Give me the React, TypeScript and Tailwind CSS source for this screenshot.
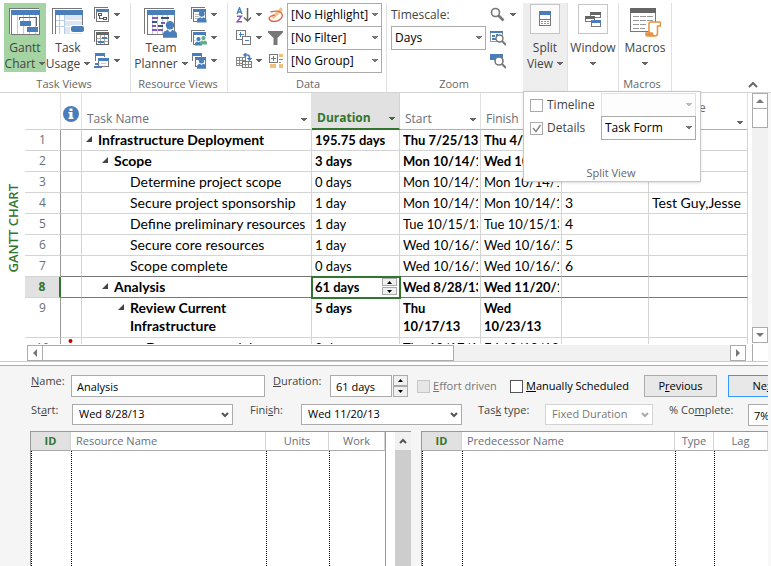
import React from "react";

const UI = "font-['Open_Sans','Noto_Sans',sans-serif]";
const GRID = "font-['Lato','Open_Sans',sans-serif]";

function Caret({ className = "text-[#666]" }: { className?: string }) {
  return (
    <svg width="6" height="4" viewBox="0 0 6 4" className={`shrink-0 ${className}`} shapeRendering="crispEdges">
      <path d="M0 0h6v1h-1v1h-1v1h-2v-1h-1v-1h-1z" fill="currentColor" />
    </svg>
  );
}

function Combo({ label, value, className, disabled }: { label: string; value: string; className: string; disabled?: boolean }) {
  return (
    <div className={`relative ${className}`}>
      <select
        aria-label={label}
        disabled={disabled}
        defaultValue={value}
        className={`block h-6 w-full appearance-none border pl-[3px] text-[12px] opacity-100 ${disabled ? "border-[#e1e1e1] bg-[#fdfdfd]" : "border-[#ababab] bg-white text-black"}`}
      >
        <option>{value}</option>
      </select>
      <span className="pointer-events-none absolute inset-y-0 right-1 flex items-center">
        <Caret className={disabled ? "text-[#bbb]" : "text-[#777]"} />
      </span>
    </div>
  );
}

/* ---------- ribbon icons ---------- */

function GanttIcon() {
  return (
    <svg width="32" height="28" viewBox="0 0 32 28" shapeRendering="crispEdges">
      <path d="M0 26V0h30v1H1v25z" fill="#777" />
      <path d="M1 1h29v1H2v24H1z" fill="#fff" />
      <rect x="2.500" y="2.500" width="28" height="24" fill="#fff" stroke="#777" />
      <rect x="3" y="2" width="28" height="5" fill="#4a7ebb" />
      <path d="M8.500 7v19M14.500 7v19M20.500 7v19M26.500 7v19" stroke="#b8cde4" />
      <path d="M10.500 12V9.500h17V18" stroke="#666" fill="none" />
      <rect x="11" y="13" width="11" height="5" fill="#4a7ebb" />
      <rect x="18" y="19" width="11" height="5" fill="#4a7ebb" />
    </svg>
  );
}

function UsageIcon() {
  return (
    <svg width="33" height="28" viewBox="0 0 33 28" shapeRendering="crispEdges">
      <path d="M0 26V0h30v1H1v25z" fill="#777" />
      <rect x="3.500" y="2.500" width="27" height="24" fill="#fff" />
      <path d="M3.500 26V3M30.500 3v14" stroke="#777" />
      <rect x="3" y="2" width="28" height="5" fill="#4a7ebb" />
      <rect x="13" y="7" width="17" height="19" fill="#dbe6f2" />
      <path d="M13 12.500h17M13 18.500h17" stroke="#fff" />
      <path d="M4 12.500h9M4 18.500h9M7.500 7v19M12.500 7v19" stroke="#b8cde4" />
      <rect x="18" y="17" width="14" height="8" fill="#fff" />
      <rect x="19" y="18" width="13" height="6" rx="2" fill="#4a7ebb" shapeRendering="auto" />
    </svg>
  );
}

function Person({ x, y, s = 1, fill = "#4a7ebb" }: { x: number; y: number; s?: number; fill?: string }) {
  return (
    <g transform={`translate(${x} ${y}) scale(${s})`} fill={fill}>
      <circle cx="5" cy="3" r="3" />
      <path d="M0 12V9.500C0 7.500 2 7 3.500 6.500L5 8l1.500-1.500C8 7 10 7.500 10 9.500V12z" />
    </g>
  );
}

function PlannerIcon() {
  return (
    <svg width="34" height="30" viewBox="0 0 34 30">
      <g shapeRendering="crispEdges">
        <path d="M0 26V0h30v1H1v25z" fill="#777" />
        <rect x="3.500" y="2.500" width="27" height="24" fill="#fff" stroke="#777" />
        <rect x="3" y="2" width="28" height="5" fill="#4a7ebb" />
        <path d="M8.500 7v19M13.500 7v19M18.500 7v19M23.500 7v19" stroke="#b8cde4" />
        <path d="M8 10h6M8 18h4M17 15h4" stroke="#8a56b5" strokeWidth="2" />
        <path d="M17 10h8M8 14h5M14 18h5" stroke="#3d5577" strokeWidth="2" />
        <path d="M8 22h5M14 22h5" stroke="#8a56b5" strokeWidth="2" />
      </g>
      <Person x={19} y={13} s={1.400} />
    </svg>
  );
}

function SmallIcon({ kind }: { kind: string }) {
  const frame = (
    <g shapeRendering="crispEdges">
      <path d="M0 12V0h14v1H1v11z" fill="#777" />
      <rect x="2.500" y="3.500" width="12" height="11" fill="#fff" stroke="#777" />
      <rect x="2" y="2" width="13" height="3" fill="#4a7ebb" />
    </g>
  );
  return (
    <svg width="16" height="16" viewBox="0 0 16 16" className="shrink-0">
      {kind === "network" && (
        <>
          {frame}
          <path d="M4.500 6.500h3v2h-3zM9.500 12.500h3v-2h-3zM5.500 9v2.500H9" fill="none" stroke="#555" shapeRendering="crispEdges" />
        </>
      )}
      {kind === "calendar" && (
        <g shapeRendering="crispEdges">
          <path d="M0 12V0h14v1H1v11z" fill="#777" />
          <rect x="2.500" y="2.500" width="12" height="12" fill="#fff" stroke="#666" />
          <rect x="2" y="2" width="13" height="3" fill="#666" />
          <path d="M6.500 5v9M10.500 5v9M3 8.500h11M3 11.500h11" stroke="#aaa" />
          <path d="M8 8h5M4 12h6" stroke="#4a7ebb" strokeWidth="2" />
        </g>
      )}
      {kind === "other" && (
        <g shapeRendering="crispEdges">
          <path d="M1.500 8V.5h9v3" fill="none" stroke="#777" />
          <rect x="1" y="0" width="10" height="3" fill="#4a7ebb" />
          <rect x="4.500" y="5.500" width="10" height="8" fill="#fff" stroke="#777" />
          <rect x="4" y="5" width="11" height="3" fill="#4a7ebb" />
          <path d="M0 14h8M1 11h3" stroke="#4a7ebb" strokeWidth="2" />
          <path d="M7 10.500h5" stroke="#b8cde4" />
        </g>
      )}
      {kind === "sheet" && (
        <>
          {frame}
          <path d="M4 7.500h4M4 9.500h4M4 11.500h4" stroke="#bbb" />
          <Person x={6} y={4} s={0.950} />
        </>
      )}
      {kind === "rusage" && (
        <>
          {frame}
          <path d="M3 7.500h11M3 10.500h5" stroke="#b8cde4" />
          <path d="M3 6h13v10H7z" fill="#fff" />
          <Person x={4} y={7} s={0.700} />
          <Person x={9} y={6} s={0.700} fill="#5fae8a" />
        </>
      )}
      {kind === "rother" && (
        <>
          <g shapeRendering="crispEdges">
            <path d="M1.500 8V.5h9v3" fill="none" stroke="#777" />
            <rect x="1" y="0" width="10" height="3" fill="#4a7ebb" />
            <rect x="4.500" y="5.500" width="10" height="8" fill="#fff" stroke="#777" />
            <rect x="4" y="4" width="11" height="3" fill="#4a7ebb" />
          </g>
          <Person x={6} y={5} s={0.900} />
        </>
      )}
      {kind === "sort" && (
        <g fill="none">
          <path d="M1 7L3.500.8 6 7M1.800 5h3.400" stroke="#4a7ebb" strokeWidth="1.400" />
          <path d="M1 9.200H5.500L1 14.800H6" stroke="#8a56b5" strokeWidth="1.400" />
          <path d="M11.500 1v13M8 10.500l3.500 3.500 3.500-3.500" stroke="#666" strokeWidth="1.500" />
        </g>
      )}
      {kind === "outline" && (
        <g shapeRendering="crispEdges" fill="none" stroke="#777">
          <path d="M.5.5h9v9h-9z" fill="#fff" />
          <path d="M6.500 6.500h8v8h-8z" fill="#fff" />
          <path d="M2.500 4.500h5M4.500 2v5M8.500 10.500h4" stroke="#4a7ebb" />
        </g>
      )}
      {kind === "tables" && (
        <g fill="none">
          <path d="M.5 4.500h9v8h-9zM.5 7.500h9M.5 10h9M3.500 5v7M6.500 5v7" stroke="#888" shapeRendering="crispEdges" />
          <path d="M6.500 8.500h9v6h-9z" fill="#fff" stroke="#777" shapeRendering="crispEdges" />
          <path d="M7 11.500h9M9.500 9v6M12.500 9v6" stroke="#888" shapeRendering="crispEdges" />
          <path d="M8 2h3.500c1.500 0 2 1 2 2.500V7M11.500 5l2 2 2-2M10 0L8 2l2 2" stroke="#4a7ebb" strokeWidth="1.500" />
        </g>
      )}
      {kind === "highlight" && (
        <g fill="none">
          <path d="M4.500 11L14 1.500" stroke="#f0c58a" strokeWidth="3.200" />
          <path d="M2.500 5c4-1 9-1.500 11 1 2.500 4-2 8.500-7.500 8.500C2 14.500-.5 11.500 2.500 9.500c1.500-1 3-1.500 4.500-1.500" stroke="#dd6a4e" strokeWidth="1.400" />
        </g>
      )}
      {kind === "filter" && <path d="M0 1h15v1.500L9.500 8v7h-4V8L0 2.500z" fill="#777" />}
      {kind === "group" && (
        <g shapeRendering="crispEdges">
          <path d="M1.500 1.500h8v8h-8zM3 5.500h5M5.500 3v5" fill="#fff" stroke="#777" />
          <path d="M11 1h4v3h-4zM2 11h6v4H2zM11 11h4v4h-4z" fill="#efbf7b" />
          <path d="M11 6.500h4M11 9.500h2" stroke="#888" />
        </g>
      )}
      {kind === "zoom" && (
        <g fill="none" stroke="#777">
          <circle cx="5.500" cy="5.500" r="4" strokeWidth="1.600" />
          <path d="M8.500 8.500l5 5" strokeWidth="2.600" />
        </g>
      )}
      {kind === "zoomsheet" && (
        <g>
          <path d="M.5 1.500h12v10H.5z" fill="#fff" stroke="#999" shapeRendering="crispEdges" />
          <path d="M0 1h13v2H0zM2 5h3v2H2zM2 8h4v2H2zM6 4h2v2H6z" fill="#4a7ebb" shapeRendering="crispEdges" />
          <circle cx="9.500" cy="8.500" r="3.500" fill="#fff" stroke="#777" strokeWidth="1.400" />
          <path d="M12 11l4 4" stroke="#777" strokeWidth="2" />
        </g>
      )}
      {kind === "zoomsel" && (
        <g>
          <path d="M0 1h13v6H0z" fill="#4a7ebb" shapeRendering="crispEdges" />
          <circle cx="9" cy="8" r="4" fill="#fff" stroke="#777" strokeWidth="1.600" />
          <path d="M12 11l4 4" stroke="#777" strokeWidth="2" />
        </g>
      )}
    </svg>
  );
}

function SmallButton({ kind, label, caret = true }: { kind: string; label: string; caret?: boolean }) {
  return (
    <button type="button" aria-label={label} className="flex h-[23px] items-center gap-1">
      <SmallIcon kind={kind} />
      {caret && <Caret />}
    </button>
  );
}

function Group({ title, className, children }: { title: string; className: string; children: React.ReactNode }) {
  return (
    <section className={`flex shrink-0 flex-col justify-between border-r border-[#e1e1e1] ${className}`}>
      <div className="flex">{children}</div>
      <h2 className="pr-1.5 text-center text-[11px] leading-4 text-[#666]">{title}</h2>
    </section>
  );
}

function BigButton({ icon, lines, className }: { icon: React.ReactNode; lines: [string, string?]; className: string }) {
  return (
    <button type="button" className={`flex h-[69px] flex-col items-center pt-[5px] text-[12px] leading-4 text-[#444] ${className}`}>
      <span className="flex h-[33px] items-start">{icon}</span>
      <span>{lines[0]}</span>
      <span className="flex h-4 items-center gap-1">
        {lines[1]}
        <Caret />
      </span>
    </button>
  );
}

function Ribbon() {
  return (
    <header className="flex h-[93px] shrink-0 border-b border-[#d4d4d4] bg-white pt-[3px] pl-1">
      <Group title="Task Views" className="w-[127px]">
        <BigButton icon={<GanttIcon />} lines={["Gantt", "Chart"]} className="w-[42px] bg-[#a5d3a2]" />
        <BigButton icon={<UsageIcon />} lines={["Task", "Usage"]} className="w-[44px]" />
        <div className="flex flex-col pl-1">
          <SmallButton kind="network" label="Network Diagram" />
          <SmallButton kind="calendar" label="Calendar" />
          <SmallButton kind="other" label="Other Task Views" />
        </div>
      </Group>
      <Group title="Resource Views" className="w-[97px] pl-1">
        <BigButton icon={<PlannerIcon />} lines={["Team", "Planner"]} className="w-[52px]" />
        <div className="flex flex-col pl-1">
          <SmallButton kind="sheet" label="Resource Sheet" />
          <SmallButton kind="rusage" label="Resource Usage" />
          <SmallButton kind="rother" label="Other Resource Views" />
        </div>
      </Group>
      <Group title="Data" className="w-[159px] pl-2">
        <div className="flex w-8 flex-col">
          <SmallButton kind="sort" label="Sort" />
          <SmallButton kind="outline" label="Outline" />
          <SmallButton kind="tables" label="Tables" />
        </div>
        <div className="flex w-[19px] flex-col">
          <SmallButton kind="highlight" label="Highlight" caret={false} />
          <SmallButton kind="filter" label="Filter" caret={false} />
          <SmallButton kind="group" label="Group" caret={false} />
        </div>
        <div className="flex flex-col -space-y-px">
          <Combo label="Highlight" value="[No Highlight]" className="w-[95px]" />
          <Combo label="Filter" value="[No Filter]" className="w-[95px]" />
          <Combo label="Group by" value="[No Group]" className="w-[95px]" />
        </div>
      </Group>
      <Group title="Zoom" className="w-[136px] border-r-0 pl-1">
        <div className="flex w-[95px] flex-col">
          <span className="h-[23px] text-[12px] leading-[23px] text-[#444]">Timescale:</span>
          <Combo label="Timescale" value="Days" className="w-full" />
        </div>
        <div className="flex flex-col pl-1">
          <SmallButton kind="zoom" label="Zoom" />
          <SmallButton kind="zoomsheet" label="Entire Project" caret={false} />
          <SmallButton kind="zoomsel" label="Selected Tasks" caret={false} />
        </div>
      </Group>
      <button type="button" className="flex w-[45px] shrink-0 flex-col items-center border-r border-[#e1e1e1] bg-[#eee] pt-px text-[12px] leading-4 text-[#444]">
        <span className="mb-1.5 flex h-[30px] w-[30px] items-center justify-center border border-[#c6c6c6] bg-[#fbfbfb]">
          <svg width="12" height="16" viewBox="0 0 12 16" shapeRendering="crispEdges">
            <rect x=".5" y=".5" width="11" height="14" fill="#fff" stroke="#777" />
            <path d="M0 0h12v4H0z" fill="#4a7ebb" />
            <path d="M1 8.500h10" stroke="#777" />
            <path d="M2 10.500h8M2 12.500h8" stroke="#999" strokeDasharray="2 1" />
          </svg>
        </span>
        <span>Split</span>
        <span className="flex items-center gap-1">View <Caret /></span>
      </button>
      <button type="button" className="flex w-[51px] shrink-0 flex-col items-center border-r border-[#e1e1e1] pt-px text-[12px] leading-4 text-[#444]">
        <span className="mb-1.5 flex h-[30px] w-[30px] items-center justify-center border border-[#c6c6c6] bg-white">
          <svg width="16" height="15" viewBox="0 0 16 15" shapeRendering="crispEdges">
            <path d="M5.500.5h10v5h-10z" fill="#fff" stroke="#777" />
            <path d="M5 0h11v3H5z" fill="#666" />
            <path d="M.5 4.500h9v5h-9z" fill="#fff" stroke="#777" />
            <path d="M0 4h10v3H0z" fill="#666" />
            <path d="M6.500 8.500h9v6h-9z" fill="#fff" stroke="#777" />
            <path d="M6 8h10v3H6z" fill="#4a7ebb" />
          </svg>
        </span>
        <span>Window</span>
        <span className="flex h-4 items-center"><Caret /></span>
      </button>
      <Group title="Macros" className="w-[53px]">
        <BigButton
          className="w-full"
          lines={["Macros"]}
          icon={
            <svg width="31" height="29" viewBox="0 0 31 29">
              <g shapeRendering="crispEdges">
                <path d="M.5.5h25v23H.5z" fill="#fff" stroke="#777" />
                <path d="M0 0h26v5H0z" fill="#666" />
                <path d="M3 8.500h20M3 12.500h20M3 16.500h14M3 20.500h12" stroke="#999" strokeDasharray="6 1" />
              </g>
              <path d="M19 25.500V16c0-1.500 1-2 2-2h8c1 0 1.500.8 1.500 2v2h-3v7c0 2-1 3-2.500 3h-7c-1.500 0-2.500-1-2-3h6c0 2 1 3 2.500 3" fill="#fff" stroke="#e8913f" strokeWidth="1.500" />
              <path d="M16.500 25h6.500c0 1.500.8 2.500 2 3h-6.500c-1.500 0-2.500-1-2-3z" fill="#e8913f" />
            </svg>
          }
        />
      </Group>
      <button type="button" aria-label="Collapse the Ribbon" className="ml-auto flex items-end pr-[13px] pb-1">
        <svg width="10" height="6" viewBox="0 0 10 6"><path d="M1 5l4-4 4 4" fill="none" stroke="#666" strokeWidth="2" /></svg>
      </button>
    </header>
  );
}

function SplitViewMenu() {
  return (
    <div className="absolute top-[91px] left-[523px] z-10 flex h-[91px] w-[178px] flex-col border border-[#c6c6c6] bg-white pt-px pr-1 pl-1.5 text-[12px] text-[#444] shadow-sm">
      <div className="flex items-center">
        <label className="flex w-[71px] items-center gap-1">
          <input type="checkbox" className="h-[13px] w-[13px] appearance-none border border-[#ababab] bg-white" />
          Timeline
        </label>
        <Combo label="Timeline view" value="" disabled className="w-[95px]" />
      </div>
      <div className="-mt-px flex items-center">
        <label className="flex w-[71px] items-center gap-1">
          <span className="grid">
            <input type="checkbox" defaultChecked className="col-start-1 row-start-1 h-[13px] w-[13px] appearance-none border border-[#ababab] bg-white" />
            <svg width="13" height="13" viewBox="0 0 13 13" className="pointer-events-none col-start-1 row-start-1">
              <path d="M3 6l3 3.500L10.500 3" fill="none" stroke="#888" strokeWidth="1.500" />
            </svg>
          </span>
          Details
        </label>
        <Combo label="Details view" value="Task Form" className="w-[95px]" />
      </div>
      <div className="mt-auto pr-1 text-center text-[11px] leading-4 text-[#666]">Split View</div>
    </div>
  );
}

/* ---------- task sheet ---------- */

type Task = {
  id: number;
  name: string;
  level: number;
  summary?: boolean;
  duration: string;
  start: string;
  finish: string;
  pred?: string;
  res?: string;
  flag?: boolean;
};

const tasks: Task[] = [
  { id: 1, name: "Infrastructure Deployment", level: 0, summary: true, duration: "195.75 days", start: "Thu 7/25/13", finish: "Thu 4/24/14" },
  { id: 2, name: "Scope", level: 1, summary: true, duration: "3 days", start: "Mon 10/14/13", finish: "Wed 10/16/13" },
  { id: 3, name: "Determine project scope", level: 2, duration: "0 days", start: "Mon 10/14/13", finish: "Mon 10/14/13" },
  { id: 4, name: "Secure project sponsorship", level: 2, duration: "1 day", start: "Mon 10/14/13", finish: "Mon 10/14/13", pred: "3", res: "Test Guy,Jesse Ryan" },
  { id: 5, name: "Define preliminary resources", level: 2, duration: "1 day", start: "Tue 10/15/13", finish: "Tue 10/15/13", pred: "4" },
  { id: 6, name: "Secure core resources", level: 2, duration: "1 day", start: "Wed 10/16/13", finish: "Wed 10/16/13", pred: "5" },
  { id: 7, name: "Scope complete", level: 2, duration: "0 days", start: "Wed 10/16/13", finish: "Wed 10/16/13", pred: "6" },
  { id: 8, name: "Analysis", level: 1, summary: true, duration: "61 days", start: "Wed 8/28/13", finish: "Wed 11/20/13" },
  { id: 9, name: "Review Current Infrastructure", level: 2, summary: true, duration: "5 days", start: "Thu 10/17/13", finish: "Wed 10/23/13" },
  { id: 10, name: "Document model", level: 3, duration: "2 days", start: "Thu 10/17/13", finish: "Fri 10/18/13", flag: true },
];

const indent = ["pl-px", "pl-[17px]", "pl-[33px]", "pl-[49px]"];

function HeadCell({ children, pad = "pb-[3px]", active }: { children?: React.ReactNode; pad?: string; active?: boolean }) {
  return (
    <th className={`h-[37px] border-r border-b px-1 pt-0 align-bottom font-normal ${active ? "border-b-2 border-r-[#d4d4d4] border-b-[#31752f] bg-[#e1e1e1]" : "border-r-[#e1e1e1] border-b-[#b1b1b1]"} ${pad}`}>
      <div className={`flex items-end justify-between pl-px text-[12px] leading-[14px] ${active ? "font-bold text-[#31752f]" : "text-[#6a6e7a]"}`}>
        <span>{children}</span>
        <span className="flex h-3 items-center"><Caret className={active ? "text-[#31752f]" : "text-[#666]"} /></span>
      </div>
    </th>
  );
}

function Spin() {
  return (
    <span className="flex flex-col gap-px">
      {["M1 3h5L3.500 0z", "M1 0h5L3.500 3z"].map((d, i) => (
        <button key={i} type="button" aria-label={i ? "Decrease" : "Increase"} className="flex h-2 w-[15px] items-center justify-center border border-[#ababab] bg-[#f0f0f0]">
          <svg width="7" height="3" viewBox="0 0 7 3"><path d={d} fill="#000" /></svg>
        </button>
      ))}
    </span>
  );
}

function TaskSheet() {
  return (
    <div className="flex h-[251px] overflow-hidden">
      <div className="flex w-[25px] shrink-0 items-center justify-center pt-5">
        <span className="rotate-180 text-[13px] leading-[18px] font-semibold whitespace-nowrap text-[#31752f] [writing-mode:vertical-rl]">GANTT CHART</span>
      </div>
      <div className="min-w-0 flex-1 overflow-hidden">
        <table className="w-full table-fixed border-separate border-spacing-0 text-left">
          <colgroup>
            <col className="w-9" />
            <col className="w-[21px]" />
            <col className="w-[230px]" />
            <col className="w-[88px]" />
            <col className="w-[81px]" />
            <col className="w-[81px]" />
            <col className="w-[87px]" />
            <col />
          </colgroup>
          <thead>
            <tr>
              <th aria-label="Row" className="border-r border-b border-r-[#e1e1e1] border-b-[#d4d4d4]" />
              <th aria-label="Indicators" className="border-r border-b border-r-[#e1e1e1] border-b-[#b1b1b1] p-0 pb-[7px] pl-0.5 align-bottom">
                <svg width="16" height="16" viewBox="0 0 16 16">
                  <circle cx="8" cy="8" r="8" fill="#4a7ebb" />
                  <path d="M6.500 2.500h3v2.500h-3zM5.500 6h4v5.500h1V13h-5v-1.500h1v-4h-1z" fill="#fff" />
                </svg>
              </th>
              <HeadCell>Task Name</HeadCell>
              <HeadCell active>Duration</HeadCell>
              <HeadCell>Start</HeadCell>
              <HeadCell>Finish</HeadCell>
              <HeadCell>Predecessors</HeadCell>
              <HeadCell pad="pb-0">Resource<br />Names</HeadCell>
            </tr>
          </thead>
          <tbody className={GRID}>
            {tasks.map((t) => {
              const sel = t.id === 8;
              const edge = t.id === 7 || sel ? "border-b-[#777]" : "border-b-[#d4d4d4]";
              const cell = `border-r border-b border-r-[#d4d4d4] ${edge} pt-0 pb-px pl-[3px] pr-0.5 align-top leading-[18px] text-black ${t.summary ? "font-bold" : ""}`;
              const text = `block overflow-hidden pt-px ${t.id === 9 ? "" : "whitespace-nowrap"}`;
              return (
                <tr key={t.id} className={t.id === 9 ? "h-10" : ""}>
                  <td className={`border-r border-b border-b-[#d4d4d4] p-0 pt-px text-center align-top text-[12px] leading-[18px] ${UI} ${sel ? "border-r-2 border-r-[#31752f] bg-[#e1e1e1] font-bold text-[#31752f]" : "border-r-[#999] text-[#6a6e7a]"}`}>{t.id}</td>
                  <td className={`border-r border-b border-r-[#d4d4d4] p-0 align-top ${edge}`}>
                    {t.flag && (
                      <svg width="19" height="18" viewBox="0 0 19 18" className="block">
                        <circle cx="9.500" cy="3" r="2" fill="#c00000" />
                        <path d="M6 6h7v5H6zM7 11h5v6H7z" fill="#c00000" />
                      </svg>
                    )}
                  </td>
                  <td className={`${cell} text-[14px]`}>
                    <div className={`flex gap-1 ${indent[t.level]}`}>
                      <span className="flex h-[18px] w-2 shrink-0 items-center">
                        {t.summary && <svg width="6" height="6" viewBox="0 0 6 6"><path d="M6 0v6H0z" fill="#444" /></svg>}
                      </span>
                      <span className={text}>{t.name}</span>
                    </div>
                  </td>
                  <td className={`${cell} text-[13px] ${sel ? "outline-2 -outline-offset-1 outline-[#31752f]" : ""}`}>
                    <div className="flex items-center justify-between">
                      <span className={text}>{t.duration}</span>
                      {sel && <Spin />}
                    </div>
                  </td>
                  <td className={`${cell} text-[13px]`}><span className={text}>{t.start}</span></td>
                  <td className={`${cell} text-[13px]`}><span className={text}>{t.finish}</span></td>
                  <td className={`${cell} text-[14px]`}><span className={text}>{t.pred}</span></td>
                  <td className={`${cell} text-[14px]`}><span className={text}>{t.res}</span></td>
                </tr>
              );
            })}
          </tbody>
        </table>
      </div>
    </div>
  );
}

function Arrow({ d, label }: { d: string; label: string }) {
  return (
    <button type="button" aria-label={label} className="flex h-4 w-4 shrink-0 items-center justify-center border border-[#ababab] bg-white">
      <svg width="8" height="8" viewBox="0 0 8 8"><path d={d} fill="#777" /></svg>
    </button>
  );
}

function SheetPane() {
  return (
    <section className="flex shrink-0 border-b border-[#ccc] bg-white">
      <div className="min-w-0 flex-1">
        <TaskSheet />
        <div className="flex h-[17px] pt-px pr-0.5 pl-[27px]">
          <Arrow label="Scroll left" d="M6 0v8L2 4z" />
          <div className="flex flex-1 bg-[#f1f1f1]">
            <div className="-ml-px w-3/5 border border-[#ababab] bg-white" />
          </div>
          <Arrow label="Scroll right" d="M2 0v8l4-4z" />
        </div>
      </div>
      <div className="flex w-5 shrink-0 flex-col pl-1">
        <Arrow label="Scroll up" d="M0 6h8L4 2z" />
        <div className="flex w-4 flex-1 flex-col bg-[#f1f1f1]">
          <div className="-mt-px h-5 border border-[#ababab] bg-white" />
        </div>
        <Arrow label="Scroll down" d="M0 2h8L4 6z" />
        <div className="mt-px h-[17px] border-l border-[#ababab]" />
      </div>
    </section>
  );
}

/* ---------- task form ---------- */

function FormSelect({ id, value, className, disabled }: { id: string; value: string; className: string; disabled?: boolean }) {
  return (
    <span className={`relative ${className}`}>
      <select id={id} disabled={disabled} defaultValue={value} className={`block h-[21px] w-full appearance-none border bg-white pl-1.5 text-[11px] opacity-100 ${disabled ? "border-[#d4d4d4] text-[#777]" : "border-[#ababab] text-black"}`}>
        <option>{value}</option>
      </select>
      <span className="pointer-events-none absolute inset-y-0 right-1 flex items-center">
        <svg width="8" height="6" viewBox="0 0 8 6"><path d="M1 1l3 3 3-3" fill="none" stroke={disabled ? "#aaa" : "#555"} strokeWidth="2" /></svg>
      </span>
    </span>
  );
}

function Chart({ head, cols, className }: { head: string[]; cols: React.ReactNode; className: string }) {
  return (
    <table className={`h-full table-fixed border-separate border-spacing-0 border-t border-l border-[#999] bg-white text-[11px] ${className}`}>
      <colgroup>{cols}</colgroup>
      <thead>
        <tr>
          {head.map((h, i) => (
            <th
              key={h}
              className={`h-[19px] border-r border-b border-r-[#d4d4d4] border-b-[#ababab] p-0 leading-[18px] ${i === 0 ? "bg-[#e1e1e1] font-bold text-[#31752f]" : i === 1 ? "pl-[5px] text-left font-normal text-[#6a6e7a]" : "font-normal text-[#6a6e7a]"}`}
            >
              {h}
            </th>
          ))}
        </tr>
      </thead>
      <tbody>
        <tr>
          {head.map((h) => (
            <td key={h} className="border-l border-dotted border-black" />
          ))}
        </tr>
      </tbody>
    </table>
  );
}

function TaskForm() {
  const input = "h-[22px] shrink-0 border border-[#ababab] bg-white pl-[5px] text-[11px] text-black";
  const button = "h-[22px] shrink-0 border bg-[#e8e8e8] text-[11px] text-black";
  return (
    <section className="mt-[3px] flex min-h-0 flex-1 flex-col border-t border-[#ababab] bg-[#f5f5f5] text-[11px] text-[#444]">
      <div className="flex shrink-0 items-start overflow-hidden pt-[9px] pl-[31px]">
        <label htmlFor="name" className="w-10 shrink-0 leading-3"><u>N</u>ame:</label>
        <input id="name" defaultValue="Analysis" className={`${input} w-[194px]`} />
        <label htmlFor="duration" className="ml-2 w-[57px] shrink-0 leading-3"><u>D</u>uration:</label>
        <input id="duration" defaultValue="61 days" className={`${input} w-[62px]`} />
        <span className="ml-px flex shrink-0 flex-col">
          {["M1 3h5L3.500 0z", "M1 0h5L3.500 3z"].map((d, i) => (
            <button key={i} type="button" aria-label={i ? "Less" : "More"} className="flex h-[11px] w-[15px] items-center justify-center border border-[#ababab] bg-[#f0f0f0]">
              <svg width="7" height="3" viewBox="0 0 7 3"><path d={d} fill="#000" /></svg>
            </button>
          ))}
        </span>
        <label className="ml-[9px] flex h-[22px] w-[84px] shrink-0 items-center gap-[3px] text-[#777]">
          <input type="checkbox" disabled className="h-[13px] w-[13px] shrink-0 appearance-none border border-[#c6c6c6] bg-[#e6e6e6]" />
          <span className="whitespace-nowrap"><u>E</u>ffort driven</span>
        </label>
        <label className="ml-[9px] flex h-[22px] w-[134px] shrink-0 items-center gap-[3px] text-black">
          <input type="checkbox" className="h-[13px] w-[13px] shrink-0 appearance-none border border-[#555] bg-white" />
          <span className="whitespace-nowrap"><u>M</u>anually Scheduled</span>
        </label>
        <button type="button" className={`${button} w-[73px] border-[#ababab]`}>P<u>r</u>evious</button>
        <button type="button" className={`${button} ml-[11px] w-[73px] border-[#3399ff]`}>Ne<u>x</u>t</button>
      </div>
      <div className="flex shrink-0 items-start overflow-hidden pt-[7px] pb-[5px] pl-[31px]">
        <label htmlFor="start" className="w-[41px] shrink-0 leading-3">St<u>a</u>rt:</label>
        <FormSelect id="start" value="Wed 8/28/13" className="w-[161px] shrink-0" />
        <label htmlFor="finish" className="ml-[17px] w-[51px] shrink-0 leading-3">Fini<u>s</u>h:</label>
        <FormSelect id="finish" value="Wed 11/20/13" className="w-[161px] shrink-0" />
        <label htmlFor="type" className="ml-4 w-[67px] shrink-0 leading-3">Tas<u>k</u> type:</label>
        <FormSelect id="type" value="Fixed Duration" disabled className="w-[108px] shrink-0" />
        <label htmlFor="pct" className="ml-4 w-[79px] shrink-0 leading-3 whitespace-nowrap">% Co<u>m</u>plete:</label>
        <input id="pct" defaultValue="7%" className={`${input} w-[62px]`} />
      </div>
      <div className="flex min-h-0 flex-1 pl-[30px]">
        <Chart
          head={["ID", "Resource Name", "Units", "Work"]}
          className="w-[356px] shrink-0 border-r"
          cols={<><col className="w-10" /><col className="w-[195px]" /><col className="w-[63px]" /><col /></>}
        />
        <div className="flex w-[25px] shrink-0 flex-col border-t border-[#999] bg-white pl-[9px]">
          <button type="button" aria-label="Scroll up" className="flex h-[18px] items-center justify-center bg-[#f1f1f1]">
            <svg width="8" height="6" viewBox="0 0 8 6"><path d="M1 5l3-3 3 3" fill="none" stroke="#555" strokeWidth="2" /></svg>
          </button>
          <div className="flex-1 bg-[#cdcdcd]" />
        </div>
        <div className="ml-2.5 min-w-0 flex-1">
          <Chart
            head={["ID", "Predecessor Name", "Type", "Lag"]}
            className="w-full"
            cols={<><col className="w-10" /><col /><col className="w-[39px]" /><col className="w-[54px]" /></>}
          />
        </div>
      </div>
    </section>
  );
}

export default function App() {
  return (
    <div className={`relative flex h-screen flex-col overflow-hidden bg-white ${UI}`}>
      <Ribbon />
      <SplitViewMenu />
      <div className="flex min-h-0 flex-1 flex-col border-r-[3px] border-[#f8f8f8]">
        <SheetPane />
        <TaskForm />
      </div>
    </div>
  );
}
